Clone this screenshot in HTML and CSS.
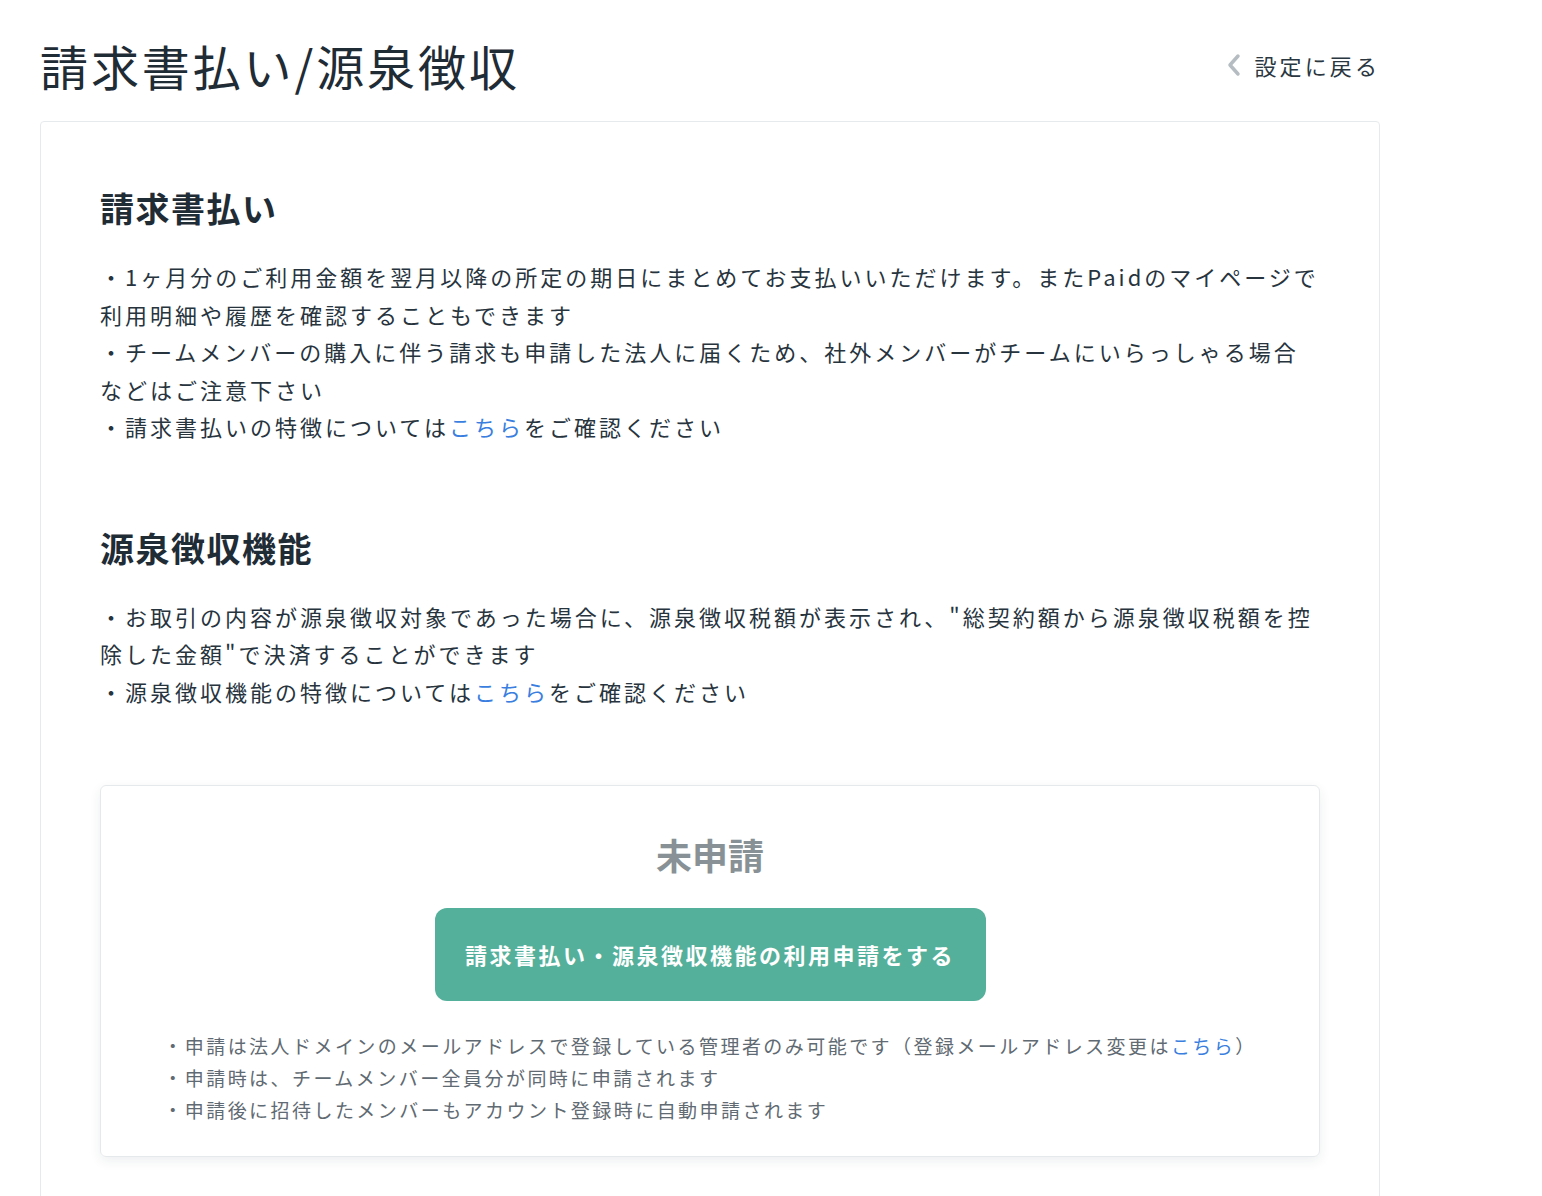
FILE: index.html
```
<!DOCTYPE html>
<html lang="ja">

<head>
    <meta charset="UTF-8">
    <meta name="viewport" content="width=device-width, initial-scale=1.0">
    <title>請求書払い/源泉徴収</title>
    <link rel="stylesheet" href="styles.css">
</head>

<body>
    <div class="page">
        <div class="header">
            <h1 class="page-title">請求書払い/源泉徴収</h1>
            <a class="back-link" href="#">
                <svg class="back-icon" width="14" height="24" viewBox="0 0 14 24">
                    <path d="M11 3 L3 12 L11 21" fill="none" stroke="#b6bdc2" stroke-width="3.5" stroke-linecap="round" stroke-linejoin="round" />
                </svg>
                <span>設定に戻る</span>
            </a>
        </div>

        <div class="card">
            <!-- 請求書払い -->
            <div class="section">
                <h2 class="section-title">請求書払い</h2>
                <p class="section-text">
                    ・1ヶ月分のご利用金額を翌月以降の所定の期日にまとめてお支払いいただけます。またPaidのマイページで利用明細や履歴を確認することもできます<br>
                    ・チームメンバーの購入に伴う請求も申請した法人に届くため、社外メンバーがチームにいらっしゃる場合などはご注意下さい<br>
                    ・請求書払いの特徴については<a href="#">こちら</a>をご確認ください
                </p>
            </div>

            <!-- 源泉徴収機能 -->
            <div class="section">
                <h2 class="section-title">源泉徴収機能</h2>
                <p class="section-text">
                    ・お取引の内容が源泉徴収対象であった場合に、源泉徴収税額が表示され、"総契約額から源泉徴収税額を控除した金額"で決済することができます<br>
                    ・源泉徴収機能の特徴については<a href="#">こちら</a>をご確認ください
                </p>
            </div>

            <!-- 申請 -->
            <div class="apply-box">
                <div class="apply-status">未申請</div>
                <a class="apply-btn" href="#">請求書払い・源泉徴収機能の利用申請をする</a>
                <ul class="apply-notes">
                    <li>・申請は法人ドメインのメールアドレスで登録している管理者のみ可能です（登録メールアドレス変更は<a href="#">こちら</a>）</li>
                    <li>・申請時は、チームメンバー全員分が同時に申請されます</li>
                    <li>・申請後に招待したメンバーもアカウント登録時に自動申請されます</li>
                </ul>
            </div>
        </div>
    </div>
</body>

</html>
```

FILE: styles.css
```
* {
    margin: 0;
    padding: 0;
    box-sizing: border-box;
}

html,
body {
    background-color: #fff;
    color: #24313b;
    font-family: "Noto Sans CJK JP", "Noto Sans", sans-serif;
}

a {
    text-decoration: none;
}

.page {
    width: 1340px;
    margin-left: 40px;
}
/* 头部 */

.header {
    display: flex;
    align-items: center;
    justify-content: space-between;
    padding: 34px 0 25px;
}

.page-title {
    font-size: 48px;
    font-weight: normal;
    line-height: 62px;
    letter-spacing: 2.9px;
    color: #1f2c36;
}

.back-link {
    display: flex;
    align-items: center;
    color: #2a3741;
    font-size: 22px;
    letter-spacing: 3.1px;
    line-height: 32px;
}

.back-icon {
    margin-right: 13px;
}
/* 卡片 */

.card {
    border: 1px solid #e7eaec;
    border-radius: 4px;
    padding: 62px 58px 60px 59px;
}

.section {
    margin-bottom: 78px;
}

.section-title {
    font-size: 34px;
    font-weight: bold;
    line-height: 48px;
    letter-spacing: 1.5px;
    margin-bottom: 26px;
    color: #1f2c36;
}

.section-text {
    font-size: 22px;
    line-height: 37.5px;
    letter-spacing: 3px;
    color: #27343e;
}

.section-text a,
.apply-notes a {
    color: #3a7fe0;
}
/* 申请框 */

.apply-box {
    width: 1220px;
    margin-top: -3px;
    border: 1px solid #e6e9eb;
    border-radius: 6px;
    box-shadow: 0 4px 12px rgba(30, 45, 60, 0.08);
    padding: 43px 0 30px;
    display: flex;
    flex-direction: column;
    align-items: center;
}

.apply-status {
    font-size: 36px;
    font-weight: bold;
    line-height: 50px;
    color: #889195;
}

.apply-btn {
    display: block;
    margin-top: 29px;
    width: 551px;
    height: 93px;
    line-height: 93px;
    text-align: center;
    background-color: #54b09a;
    border-radius: 12px;
    color: #fff;
    font-size: 22px;
    font-weight: bold;
    letter-spacing: 2.5px;
}

.apply-notes {
    list-style: none;
    margin-top: 29px;
    font-size: 19px;
    line-height: 32px;
    letter-spacing: 2.45px;
    color: #5f6a72;
}
```
